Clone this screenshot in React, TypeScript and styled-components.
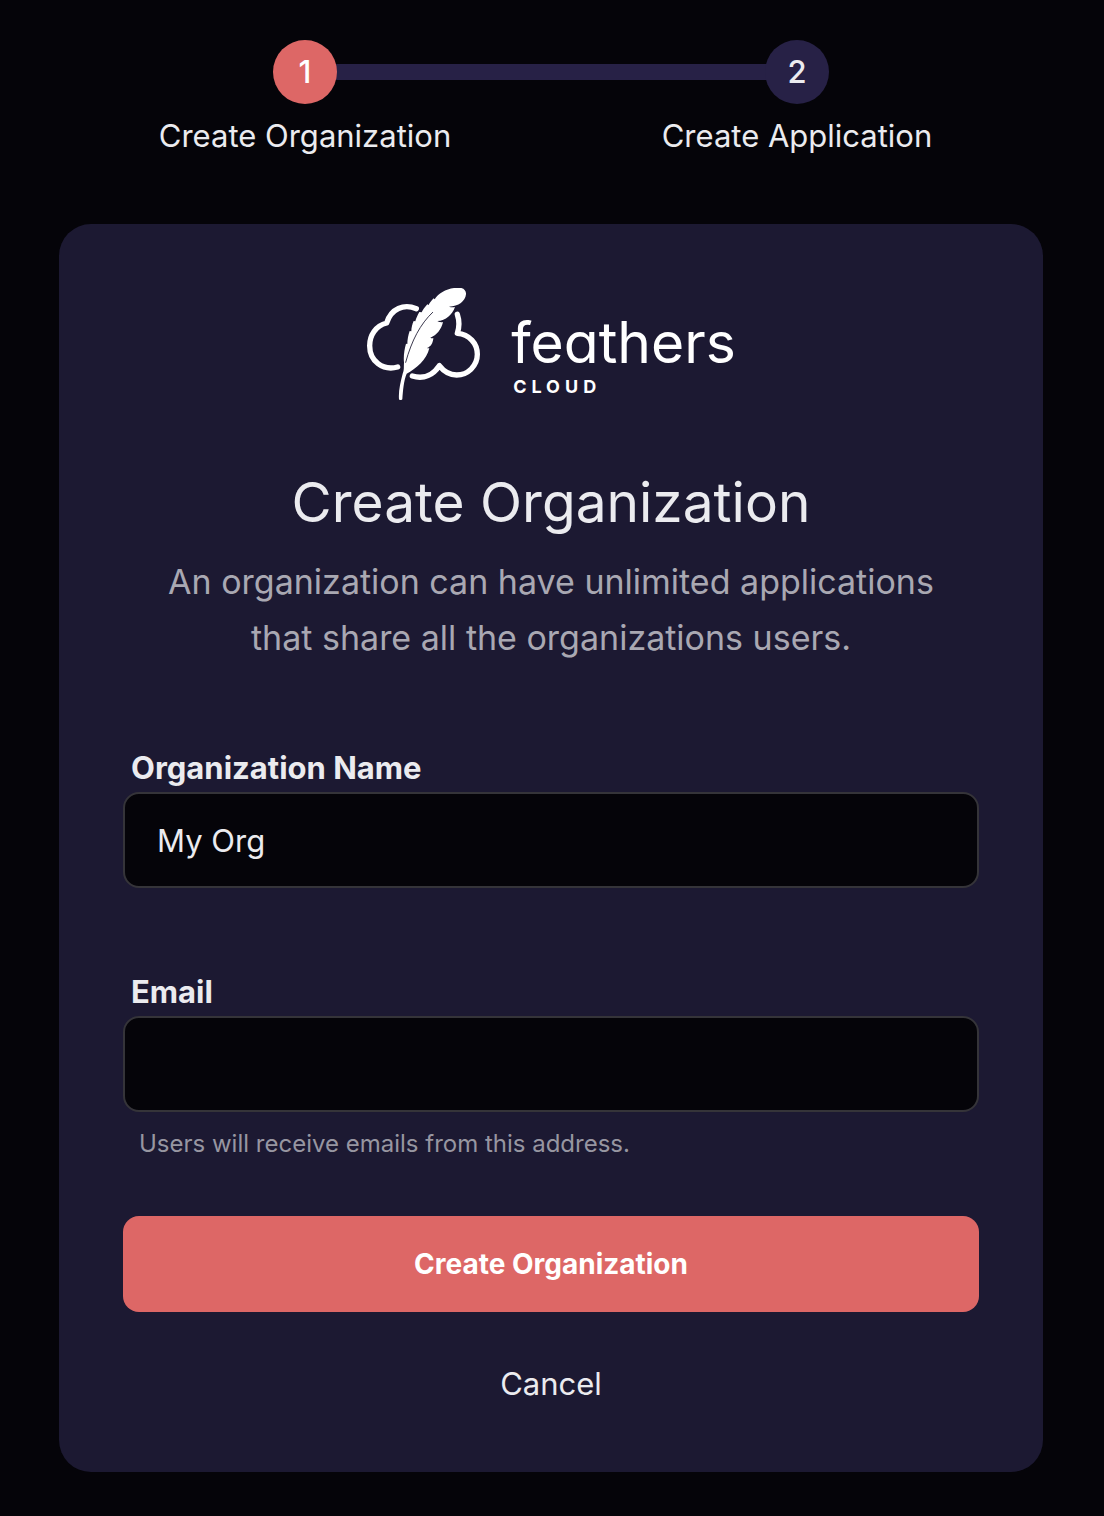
import React from "react";
import styled, { createGlobalStyle } from "styled-components";

const GlobalStyle = createGlobalStyle`
  *, *::before, *::after { box-sizing: border-box; }
  body {
    margin: 0;
    background: #050409;
    color: #ebebef;
    font-family: Inter, "Liberation Sans", sans-serif;
    font-weight: 400;
  }
`;

const Page = styled.div`
  min-height: 100vh;
  padding: 40px 61px 44px 59px;
`;

const Steps = styled.ol`
  display: grid;
  grid-template-columns: 1fr 1fr;
  margin: 0 0 64px;
  padding: 0;
  list-style: none;
`;

const Step = styled.li`
  display: flex;
  flex-direction: column;
  align-items: center;
  gap: 8px;
  font-size: 31px;
  line-height: 48px;
`;

const Track = styled.div<{ $side: "left" | "right" }>`
  align-self: stretch;
  display: flex;
  justify-content: center;
  background: linear-gradient(#272146, #272146) ${(p) => p.$side} center / 50% 16px no-repeat;
`;

const Bullet = styled.span<{ $active?: boolean }>`
  display: grid;
  place-items: center;
  width: 64px;
  height: 64px;
  border-radius: 50%;
  background: ${(p) => (p.$active ? "#dd6766" : "#272146")};
  color: ${(p) => (p.$active ? "#ffffff" : "#ebebef")};
  font-weight: 500;
`;

const Card = styled.main`
  display: flex;
  flex-direction: column;
  padding: 64px;
  border-radius: 32px;
  background: #1c1932;
`;

const Logo = styled.div`
  display: flex;
  justify-content: center;
  gap: 29px;
  color: #ffffff;
`;

const Wordmark = styled.div`
  display: flex;
  flex-direction: column;
  padding-top: 23px;
`;

const BrandName = styled.span`
  font-size: 57px;
  line-height: 64px;
  font-feature-settings: "cv11";
`;

const BrandSuffix = styled.span`
  padding-left: 2px;
  font-size: 18px;
  font-weight: 700;
  line-height: 24px;
  letter-spacing: 5px;
`;

const Title = styled.h1`
  margin: 64px 0 0;
  font-size: 55px;
  font-weight: 400;
  line-height: 76px;
  text-align: center;
`;

const Intro = styled.p`
  max-width: 800px;
  margin: 14px auto 0;
  color: #a9a8b2;
  font-size: 34px;
  line-height: 56px;
  text-align: center;
`;

const Form = styled.form`
  display: flex;
  flex-direction: column;
  margin-top: 78px;
`;

const Fields = styled.div`
  display: grid;
  gap: 80px;
`;

const Field = styled.div`
  display: flex;
  flex-direction: column;
`;

const Label = styled.label`
  padding: 0 8px;
  font-size: 31px;
  font-weight: 700;
  line-height: 48px;
`;

const Input = styled.input`
  width: 100%;
  height: 96px;
  padding: 0 32px;
  border: 2px solid #353439;
  border-radius: 16px;
  outline: none;
  background: #050409;
  color: #ebebef;
  font: inherit;
  font-size: 31px;
`;

const Hint = styled.p`
  margin: 16px 0 0;
  padding: 0 16px;
  color: #9796a1;
  font-size: 24px;
  line-height: 32px;
`;

const Submit = styled.button`
  height: 96px;
  margin-top: 56px;
  border: 0;
  border-radius: 16px;
  background: #dd6766;
  color: #ffffff;
  font: inherit;
  font-size: 28px;
  font-weight: 700;
  cursor: pointer;
`;

const Cancel = styled.button`
  align-self: center;
  margin-top: 48px;
  padding: 0 16px;
  border: 0;
  background: none;
  color: #ebebef;
  font: inherit;
  font-size: 31px;
  line-height: 48px;
  cursor: pointer;
`;

function FeatherCloud() {
  return (
    <svg width="116" height="112" viewBox="48 39 348 336" fill="none" aria-hidden="true">
      <g stroke="currentColor" strokeWidth="16" strokeLinecap="round" strokeLinejoin="round">
        <path d="M199 101C162 86 123 100 110 144C77 152 59 181 59 212C59 258 98 288 143 276" />
        <path d="M322 118C328 136 328 157 322 175C358 178 382 205 382 238C382 273 353 300 320 300C297 300 281 289 268 272C250 299 222 314 187 303" />
      </g>
      <path
        fill="currentColor"
        d="M147 373C145 350 151 322 158 296C163 286 161 276 162 262C160 246 163 222 168 206L172 207C172 194 175 180 179 168L184 169C184 158 187 147 191 138L196 139C198 130 203 120 208 111L215 112C218 105 224 97 232 88L236 90C239 84 244 77 251 70L254 73C266 52 296 38 326 38C341 38 349 47 348 58C346 78 326 95 297 95C303 97 309 97 315 96C306 120 288 137 262 138C268 142 273 142 279 141C274 164 260 180 241 188C244 190 247 190 250 189C249 205 242 215 231 219C233 220 235 220 238 219C231 254 197 282 170 296C161 318 159 346 157 373C154 376 149 376 147 373Z"
      />
      <path stroke="#1c1932" strokeWidth="2.6" strokeLinecap="round" d="M248 112C211 147 185 196 167 262" />
    </svg>
  );
}

export default function App() {
  return (
    <>
      <GlobalStyle />
      <Page>
        <Steps>
          <Step aria-current="step">
            <Track $side="right">
              <Bullet $active>1</Bullet>
            </Track>
            Create Organization
          </Step>
          <Step>
            <Track $side="left">
              <Bullet>2</Bullet>
            </Track>
            Create Application
          </Step>
        </Steps>
        <Card>
          <Logo>
            <FeatherCloud />
            <Wordmark>
              <BrandName>feathers</BrandName>
              <BrandSuffix>CLOUD</BrandSuffix>
            </Wordmark>
          </Logo>
          <Title>Create Organization</Title>
          <Intro>An organization can have unlimited applications that share all the organizations users.</Intro>
          <Form onSubmit={(event) => event.preventDefault()}>
            <Fields>
              <Field>
                <Label htmlFor="org-name">Organization Name</Label>
                <Input id="org-name" type="text" defaultValue="My Org" />
              </Field>
              <Field>
                <Label htmlFor="email">Email</Label>
                <Input id="email" type="email" aria-describedby="email-hint" />
                <Hint id="email-hint">Users will receive emails from this address.</Hint>
              </Field>
            </Fields>
            <Submit type="submit">Create Organization</Submit>
            <Cancel type="button">Cancel</Cancel>
          </Form>
        </Card>
      </Page>
    </>
  );
}
